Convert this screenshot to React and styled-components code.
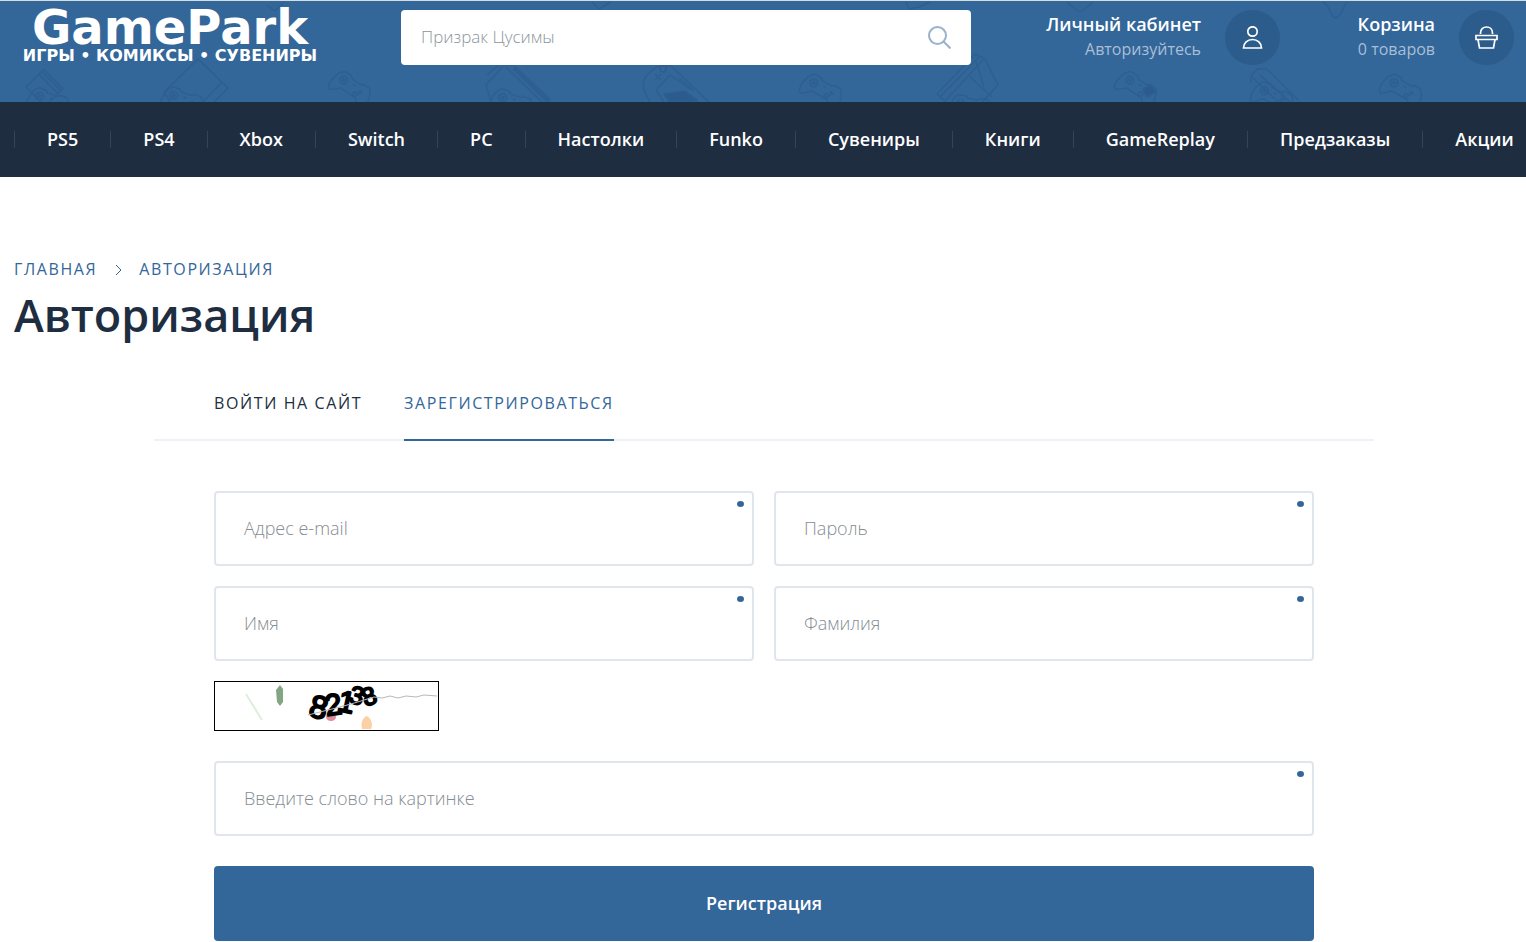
import React from 'react';
import styled, {createGlobalStyle} from 'styled-components';

const GlobalStyle = createGlobalStyle`
    * {
        box-sizing: border-box;
    }

    body {
        margin: 0;
        background: #fff;
        color: #1e2d3f;
        font-family: "Open Sans", "Noto Sans", sans-serif;
        font-size: 16px;
    }

    a {
        text-decoration: none;
        color: inherit;
    }

    input, button {
        font-family: inherit;
    }
`;

const Container = styled.div`
    max-width: 1526px;
    margin: 0 auto;
    padding: 0 12px 0 14px;
`;

const StyledHeader = styled.header`
    position: relative;
    background: #336699;
    border-top: 1px solid #d5dde0;
`;

const Pattern = styled.svg`
    position: absolute;
    top: 0;
    left: 0;
    max-width: 100%;
    fill: none;
    stroke: #2e5f91;
    stroke-width: 1.5;
    stroke-linejoin: round;
`;

const HeaderRow = styled(Container)`
    position: relative;
    display: flex;
    align-items: flex-start;
    gap: 75px;
    padding-top: 9px;
    padding-bottom: 37px;
`;

const Logo = styled.a`
    flex: 0 0 312px;
    display: flex;
    flex-direction: column;
    align-items: center;
    height: 55px;
    color: #fff;
    font-family: "DejaVu Sans", sans-serif;
    font-weight: bold;
    white-space: nowrap;
`;

const LogoName = styled.span`
    font-size: 48px;
    line-height: 34px;
`;

const LogoTagline = styled.span`
    font-size: 16px;
    line-height: 24px;
`;

const SearchForm = styled.form`
    flex: 1;
    display: flex;
    align-items: center;
    height: 55px;
    padding: 0 20px;
    background: #fff;
    border-radius: 4px;
`;

const SearchInput = styled.input`
    flex: 1;
    min-width: 0;
    height: 55px;
    padding: 0 0 2px;
    border: 0;
    outline: 0;
    background: none;
    font-size: 17px;
    font-weight: 300;

    &::placeholder {
        color: #8a959c;
        opacity: 1;
    }
`;

const SearchButton = styled.button`
    display: flex;
    padding: 0;
    border: 0;
    background: none;
`;

const HeaderLink = styled.a`
    display: flex;
    gap: 24px;
    text-align: right;
    white-space: nowrap;
`;

const HeaderLinkText = styled.div`
    min-width: 80px;
    padding-top: 2px;
    line-height: 25px;
`;

const HeaderLinkTitle = styled.div`
    color: #fff;
    font-size: 18px;
    font-weight: 600;
`;

const HeaderLinkNote = styled.div`
    color: #a9bfd6;
    font-size: 16px;
`;

const Circle = styled.span`
    display: flex;
    align-items: center;
    justify-content: center;
    width: 55px;
    height: 55px;
    border-radius: 50%;
    background: #2c5c8c;
`;

const StyledNav = styled.nav`
    background: #1e2d3f;
`;

const NavRow = styled(Container)`
    display: flex;
    align-items: center;
    justify-content: space-between;
    height: 75px;
`;

const NavLink = styled.a`
    padding-bottom: 2px;
    color: #fff;
    font-size: 18px;
    font-weight: 600;
    white-space: nowrap;
`;

const NavSeparator = styled.span`
    width: 1px;
    height: 17px;
    background: #344557;
`;

const Breadcrumbs = styled.nav`
    display: flex;
    align-items: center;
    padding-top: 80px;
    color: #336699;
    font-size: 16px;
    line-height: 24px;
    letter-spacing: 0.1em;
    text-transform: uppercase;

    svg {
        margin: 0 16px 0 18px;
    }
`;

const Title = styled.h1`
    margin: 0;
    font-size: 45px;
    font-weight: 600;
    line-height: 68px;
`;

const Panel = styled.div`
    max-width: 1220px;
    margin: 28px auto 0;
`;

const Tabs = styled.div`
    display: flex;
    gap: 42px;
    padding: 0 60px;
    border-bottom: 2px solid #eef2f6;
`;

const Tab = styled.button`
    height: 64px;
    margin-bottom: -2px;
    padding: 0 0 10px;
    border: 0;
    border-bottom: 2px solid ${props => props.$active ? "#336699" : "transparent"};
    background: none;
    color: ${props => props.$active ? "#336699" : "#1e2d3f"};
    font-size: 16px;
    letter-spacing: 0.1em;
    text-transform: uppercase;
`;

const RegisterForm = styled.form`
    display: grid;
    grid-template-columns: 1fr 1fr;
    gap: 20px;
    padding: 50px 60px 0;
`;

const StyledField = styled.label`
    position: relative;
    display: block;
    grid-column: ${props => props.$wide ? "1 / -1" : "auto"};
`;

const FieldInput = styled.input`
    display: block;
    width: 100%;
    height: 75px;
    padding: 0 28px 2px;
    border: 2px solid #e1e6ed;
    border-radius: 4px;
    outline: 0;
    font-size: 18px;
    font-weight: 300;

    &::placeholder {
        color: #858d92;
        opacity: 1;
    }
`;

const RequiredDot = styled.span`
    position: absolute;
    top: 10px;
    right: 10px;
    width: 7px;
    height: 6px;
    border-radius: 50%;
    background: #336699;
`;

const Captcha = styled.svg`
    grid-column: 1 / -1;
    display: block;
    margin-bottom: 10px;
    font-family: "Liberation Sans", sans-serif;
`;

const SubmitButton = styled.button`
    grid-column: 1 / -1;
    height: 75px;
    margin-top: 10px;
    padding: 0 0 2px;
    border: 0;
    border-radius: 4px;
    background: #336699;
    color: #fff;
    font-size: 18px;
    font-weight: 600;
`;

const navItems = [
    "PS5", "PS4", "Xbox", "Switch", "PC", "Настолки", "Funko",
    "Сувениры", "Книги", "GameReplay", "Предзаказы", "Акции"
];

const Gamepad = ({x, y, angle = 35}) => (
    <g transform={`translate(${x} ${y}) rotate(${angle})`}>
        <path d="M-20 11C-23 2-19-9-14-11L-7-11L-5-9H6L8-11L15-11C20-7 23 3 20 11C17 15 13 9 9 5H-9C-13 9-17 15-20 11Z" />
        <circle cx="-11" cy="-3" r="4" />
        <path d="M-13-5L-9-1M-9-5L-13-1" />
        <path d="M9-5V0M7-3H12M-1-5H2" />
        <circle cx="6" cy="2" r="2" />
    </g>
);

const HeaderPattern = () => (
    <Pattern width="1526" height="101" aria-hidden="true">
        <g transform="translate(26 86) rotate(-45)">
            <rect width="25" height="27" />
            <path d="M18 0V27M22 0V27" />
        </g>
        <Gamepad x={49} y={102} angle={20} />
        <path d="M267 4L275 10L284 1" />
        <path d="M164 91L198 58L228 87L214 101M164 91L170 101M222 81L203 101" />
        <Gamepad x={183} y={101} angle={20} />
        <Gamepad x={351} y={88} />
        <path d="M486 84L504 64L513 64L551 99M491 101L486 84M487 74L499 64M506 66L542 101" />
        <path d="M514 67L549 101" strokeWidth="4" />
        <Gamepad x={512} y={103} angle={20} />
        <path d="M592 1L599 8L611 1" />
        <path d="M650 101C641 87 641 78 650 71L658 65H671L709 101M670 74L656 89L664 101M670 74L692 89" />
        <path d="M664 93L685 90L697 99V101H669Z" fill="#2c5c8e" />
        <path d="M679 77L694 90M655 73L661 79M661 73L655 79" />
        <circle cx="663" cy="68" r="3" />
        <path d="M906 1L909 8L919 6L930 1M1067 1L1075 8Q1080 12 1085 8L1093 1" />
        <Gamepad x={822} y={90} angle={30} />
        <path d="M937 93L975 53L985 58L998 84L982 101M937 93L946 101M940 96L979 56M945 100L983 59M970 76L992 96M976 60L984 86" />
        <Gamepad x={971} y={107} angle={10} />
        <Gamepad x={1137} y={88} />
        <path d="M1143 88L1151 84L1156 91L1147 96Z" fill="#2c5c8e" />
        <path d="M1251 75L1257 68H1267L1299 100M1251 75L1275 98M1260 74L1290 101M1251 75V82" />
        <Gamepad x={1273} y={97} angle={25} />
        <Gamepad x={1402} y={90} angle={30} />
        <path d="M1323 1C1330 3 1330 16 1335 17C1342 16 1343 5 1347 1" />
    </Pattern>
);

const SearchIcon = () => (
    <svg width="23" height="23" viewBox="0 0 23 23" fill="none" stroke="#99b2cc" strokeWidth="2">
        <circle cx="9.5" cy="9.5" r="8.5" />
        <path d="M15.5 15.5L22.5 22.5" />
    </svg>
);

const UserIcon = () => (
    <svg width="21" height="23" viewBox="0 0 21 23" fill="none" stroke="#fff" strokeWidth="1.7">
        <circle cx="10.5" cy="5.5" r="4.7" />
        <path d="M1.5 22C1.5 17 5.5 13.5 10.5 13.5C15.5 13.5 19.5 17 19.5 22Z" />
    </svg>
);

const BasketIcon = () => (
    <svg width="23" height="23" viewBox="0 0 23 23" fill="none" stroke="#fff" strokeWidth="1.7">
        <path d="M5.5 8V7C5.5 3.5 8 1 11.5 1C15 1 17.5 3.5 17.5 7V8" />
        <path d="M1 9.5H22V13.5H1Z" />
        <path d="M3 13.5L4.5 22H18.5L20 13.5" />
    </svg>
);

const Field = ({label, type = "text", wide}) => (
    <StyledField $wide={wide}>
        <FieldInput type={type} placeholder={label} aria-label={label} required />
        <RequiredDot />
    </StyledField>
);

const HeaderAction = ({title, note, icon}) => (
    <HeaderLink href="#">
        <HeaderLinkText>
            <HeaderLinkTitle>{title}</HeaderLinkTitle>
            <HeaderLinkNote>{note}</HeaderLinkNote>
        </HeaderLinkText>
        <Circle>{icon}</Circle>
    </HeaderLink>
);

const CaptchaImage = () => (
    <Captcha width="225" height="50" viewBox="0 0 225 50" role="img" aria-label="82138">
        <path d="M32 13L48 39" stroke="#dfeedd" strokeWidth="2" />
        <path d="M66 4L69 8V21L66 25L63 21L62 9Z" fill="#84a583" />
        <ellipse cx="117" cy="36" rx="5" ry="4" fill="#e08c98" />
        <path d="M148 48C146 40 150 36 153 35C158 38 159 44 157 48Z" fill="#fbd0a6" />
        <g stroke="#000" strokeWidth="2" strokeLinejoin="round">
            <text x="96" y="37" fontSize="32" transform="rotate(14 104 26)">8</text>
            <text x="111" y="34" fontSize="30" transform="rotate(-8 119 24)">2</text>
            <text x="124" y="31" fontSize="30" transform="rotate(12 131 22)">1</text>
            <text x="136" y="23" fontSize="25" transform="rotate(15 143 14)">3</text>
            <text x="148" y="24" fontSize="25" transform="rotate(-20 155 15)">8</text>
        </g>
        <path d="M94 34L118 28L137 23L160 16L168 17L176 15L184 17L192 15L202 16L210 14L223 15" fill="none" stroke="#b5b9be" />
        <rect x="0.5" y="0.5" width="224" height="49" fill="none" stroke="#000" />
    </Captcha>
);

export default class App extends React.Component {

    render() {
        return (
            <>
                <GlobalStyle />
                <StyledHeader>
                    <HeaderPattern />
                    <HeaderRow>
                        <Logo href="#">
                            <LogoName>GamePark</LogoName>
                            <LogoTagline>ИГРЫ • КОМИКСЫ • СУВЕНИРЫ</LogoTagline>
                        </Logo>
                        <SearchForm>
                            <SearchInput type="text" placeholder="Призрак Цусимы" aria-label="Поиск" />
                            <SearchButton type="button" aria-label="Найти"><SearchIcon /></SearchButton>
                        </SearchForm>
                        <HeaderAction title="Личный кабинет" note="Авторизуйтесь" icon={<UserIcon />} />
                        <HeaderAction title="Корзина" note="0 товаров" icon={<BasketIcon />} />
                    </HeaderRow>
                </StyledHeader>
                <StyledNav>
                    <NavRow>
                        {navItems.map(item => (
                            <React.Fragment key={item}>
                                <NavSeparator />
                                <NavLink href="#">{item}</NavLink>
                            </React.Fragment>
                        ))}
                    </NavRow>
                </StyledNav>
                <Container as="main">
                    <Breadcrumbs>
                        <a href="#">Главная</a>
                        <svg width="8" height="12" viewBox="0 0 8 12" fill="none" stroke="#336699">
                            <path d="M1 2L6 7L1 12" />
                        </svg>
                        <a href="#">Авторизация</a>
                    </Breadcrumbs>
                    <Title>Авторизация</Title>
                    <Panel>
                        <Tabs>
                            <Tab type="button">Войти на сайт</Tab>
                            <Tab type="button" $active>Зарегистрироваться</Tab>
                        </Tabs>
                        <RegisterForm>
                            <Field label="Адрес e-mail" type="email" />
                            <Field label="Пароль" type="password" />
                            <Field label="Имя" />
                            <Field label="Фамилия" />
                            <CaptchaImage />
                            <Field label="Введите слово на картинке" wide />
                            <SubmitButton type="submit">Регистрация</SubmitButton>
                        </RegisterForm>
                    </Panel>
                </Container>
            </>
        )
    }
}
